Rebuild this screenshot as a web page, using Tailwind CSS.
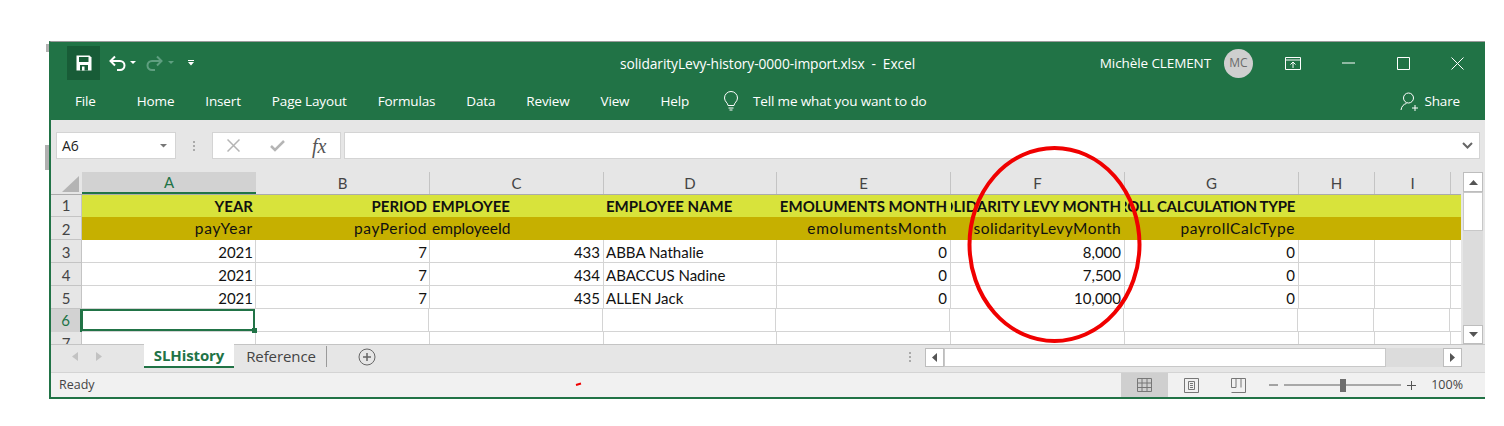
<!DOCTYPE html>
<html lang="en">
<head>
  <meta charset="UTF-8">
  <title>solidarityLevy-history-0000-import.xlsx - Excel</title>
  <script src="https://cdn.jsdelivr.net/npm/@tailwindcss/browser@4"></script>
</head>
<body class="bg-white w-[1504px] h-[426px] overflow-hidden relative font-['Open_Sans',sans-serif]">
  <div class="ml-[49px] mt-[41px] w-[1436px] h-[358px] border-t border-t-[#9a9a9a] border-l-2 border-b-2 border-l-[#217346] border-b-[#217346] flex flex-col bg-[#e6e6e6]">

    <!-- title bar -->
    <div class="h-[39px] bg-[#217346] flex items-center text-white text-[13.5px] relative shrink-0 -ml-[2px]">
      <div class="ml-[18px] mt-[3px] w-[33px] h-[34px] bg-[#185c37] flex items-center justify-center">
        <svg width="16" height="16" viewBox="0 0 16 16"><path d="M0.5 0.5h13l2 2v13h-15z" fill="#fff"/><path d="M3 2h9.500v5H3z" fill="#185c37"/><path d="M4 10h8v5.500H4z" fill="#185c37"/><path d="M6 11.500h2.500v4H6z" fill="#fff"/></svg>
      </div>
      <svg class="ml-[9px] mt-[3px]" width="18" height="16" viewBox="0 0 18 16" fill="none" stroke="#fff" stroke-width="2"><path d="M6 1.500 1.500 6 6 10.500"/><path d="M2 6h9a4.500 4.500 0 0 1 0 9H8"/></svg>
      <svg class="ml-[3px] mt-[3px]" width="6" height="4"><path d="M0 0h6L3 3z" fill="#fff"/></svg>
      <svg class="ml-[9px] mt-[3px]" width="18" height="16" viewBox="0 0 18 16" fill="none" stroke="#5f9f80" stroke-width="2"><path d="M12 1.500 16.500 6 12 10.500"/><path d="M16 6H7a4.500 4.500 0 0 0 0 9h3"/></svg>
      <svg class="ml-[5px] mt-[3px]" width="6" height="4"><path d="M0 0h6L3 3z" fill="#5f9f80"/></svg>
      <svg class="ml-[14px] mt-[3px]" width="6" height="6"><path d="M0 0h6v1H0zM0 2h6L3 5.500z" fill="#fff"/></svg>
      <div class="absolute left-[571px] top-[12px] whitespace-pre text-[13.8px] tracking-[-0.1px]">solidarityLevy-history-0000-import.xlsx  -  Excel</div>
      <div class="ml-auto flex items-center mt-[3px]">
        <span class="text-[13.5px] tracking-[-0.1px]">Michèle CLEMENT</span>
        <span class="ml-[13px] w-[29px] h-[29px] rounded-full bg-[#cfcfcf] text-[#6b6b6b] text-[12px] flex items-center justify-center">MC</span>
        <svg class="ml-[32px]" width="16" height="13" viewBox="0 0 16 13" fill="none" stroke="#fff"><path d="M.5.500h15v12H.5zM.5 3h15"/><path d="M8 11V5M5.500 7.500 8 5l2.500 2.500" /></svg>
        <svg class="ml-[41px]" width="13" height="2"><path d="M0 1h13" stroke="#fff"/></svg>
        <svg class="ml-[42px]" width="13" height="13" fill="none" stroke="#fff"><path d="M.5.500h12v12H.5z"/></svg>
        <svg class="ml-[41px] mr-[21px]" width="13" height="13" fill="none" stroke="#fff"><path d="M.5.500l12 12M12.500.500l-12 12"/></svg>
      </div>
    </div>

    <!-- ribbon tabs -->
    <div class="h-[39px] pt-[1px] bg-[#217346] flex items-center text-white text-[13.5px] tracking-[-0.15px] shrink-0 -ml-[2px]">
      <span class="ml-[26px] mr-[41px]">File</span>
      <div class="flex items-center gap-[31px]">
        <span>Home</span><span>Insert</span><span>Page Layout</span><span>Formulas</span><span>Data</span><span>Review</span><span>View</span><span>Help</span>
      </div>
      <svg class="ml-[34px]" width="16" height="20" viewBox="0 0 16 20" fill="none" stroke="#fff"><path d="M5 14.500c0-2.500-3.500-4-3.500-7.500a6.500 6.500 0 0 1 13 0c0 3.500-3.500 5-3.500 7.500zM5.500 17h5M6.500 19h3"/></svg>
      <span class="ml-[14px]">Tell me what you want to do</span>
      <div class="ml-auto flex items-center mr-[25px]">
        <svg width="19" height="19" viewBox="0 0 19 19" fill="none" stroke="#fff"><circle cx="8.500" cy="6" r="5"/><path d="M1 18c.5-4 3-6 5.500-6.500M12 16h6M15 13v6"/></svg>
        <span class="ml-[5px]">Share</span>
      </div>
    </div>

    <!-- formula bar -->
    <div class="h-[52px] pb-[1px] flex items-center shrink-0 text-[#222]">
      <div class="ml-[5px] w-[120px] h-[27px] bg-white border border-[#d4d4d4] flex items-center justify-between px-[5px] text-[14px]">
        <span>A6</span>
        <svg class="mr-[3px]" width="7" height="4"><path d="M0 0h7L3.500 3.500z" fill="#777"/></svg>
      </div>
      <div class="w-[36px] flex flex-col items-center gap-[2px]">
        <span class="w-[2px] h-[2px] bg-[#aaa]"></span><span class="w-[2px] h-[2px] bg-[#aaa]"></span><span class="w-[2px] h-[2px] bg-[#aaa]"></span>
      </div>
      <div class="w-[129px] h-[27px] bg-white border border-[#d4d4d4] flex items-center">
        <svg class="ml-[14px]" width="13" height="13" fill="none" stroke="#b5b5b5" stroke-width="1.500"><path d="M.5.500l12 12M12.500.500l-12 12"/></svg>
        <svg class="ml-[30px]" width="15" height="12" fill="none" stroke="#b5b5b5" stroke-width="2.500"><path d="M1 6l4 4 9-9"/></svg>
        <span class="ml-[27px] font-['Liberation_Serif',serif] italic text-[20px] text-[#555]">fx</span>
      </div>
      <div class="ml-[3px] w-[1136px] h-[27px] bg-white border border-[#d4d4d4] flex items-center justify-end pr-[6px]">
        <svg width="11" height="7" fill="none" stroke="#666" stroke-width="2"><path d="M1 1l4.500 4.500L10 1"/></svg>
      </div>
    </div>

    <!-- sheet grid + vertical scrollbar -->
    <div class="flex h-[172px] shrink-0 overflow-hidden font-['Lato',sans-serif] text-[15px] text-[#111]">
      <div class="w-[1410px] flex flex-col">
        <!-- column headers -->
        <div class="flex h-[23px] shrink-0 text-[#444] border-b border-[#ababab]">
          <div class="w-[31px] relative"><svg class="absolute right-[3px] bottom-[2px]" width="17" height="16"><path d="M17 0v16H0z" fill="#b4b4b4"/></svg></div>
          <div class="w-[174px] bg-[#d2d2d2] border-b-2 border-[#217346] text-[#217346] flex items-center justify-center">A</div>
          <div class="w-[174px] border-r border-[#c4c4c4] flex items-center justify-center">B</div>
          <div class="w-[174px] border-r border-[#c4c4c4] flex items-center justify-center">C</div>
          <div class="w-[173px] border-r border-[#c4c4c4] flex items-center justify-center">D</div>
          <div class="w-[174px] border-r border-[#c4c4c4] flex items-center justify-center">E</div>
          <div class="w-[174px] border-r border-[#c4c4c4] flex items-center justify-center">F</div>
          <div class="w-[174px] border-r border-[#c4c4c4] flex items-center justify-center">G</div>
          <div class="w-[76px] border-r border-[#c4c4c4] flex items-center justify-center">H</div>
          <div class="w-[76px] border-r border-[#c4c4c4] flex items-center justify-center">I</div>
        </div>

        <!-- row 1 -->
        <div class="flex h-[22px] shrink-0 font-bold">
          <div class="w-[31px] shrink-0 flex items-center justify-center font-normal text-[#444] border-r border-b border-[#c4c4c4]">1</div>
          <div class="flex flex-1 bg-[#d8e33b]">
            <div class="w-[174px] pr-[3px] flex items-center justify-end overflow-hidden"><span class="shrink-0">YEAR</span></div>
            <div class="w-[174px] pr-[3px] flex items-center justify-end overflow-hidden"><span class="shrink-0">PERIOD</span></div>
            <div class="w-[174px] pl-[2px] flex items-center overflow-hidden"><span class="shrink-0">EMPLOYEE</span></div>
            <div class="w-[173px] pl-[2px] flex items-center overflow-hidden"><span class="shrink-0">EMPLOYEE NAME</span></div>
            <div class="w-[174px] pr-[4px] flex items-center justify-end overflow-hidden"><span class="shrink-0">EMOLUMENTS MONTH</span></div>
            <div class="w-[174px] pr-[4px] flex items-center justify-end overflow-hidden"><span class="shrink-0">SOLIDARITY LEVY MONTH</span></div>
            <div class="w-[174px] pr-[4px] flex items-center justify-end overflow-hidden"><span class="shrink-0 tracking-[-0.3px]">PAYROLL CALCULATION TYPE</span></div>
          </div>
        </div>
        <!-- row 2 -->
        <div class="flex h-[23px] shrink-0">
          <div class="w-[31px] shrink-0 pt-[2px] flex items-center justify-center text-[#444] border-r border-b border-[#c4c4c4]">2</div>
          <div class="flex flex-1 bg-[#c6b000] text-[15.5px] [&>div]:pt-[1px]">
            <div class="w-[174px] pr-[3px] flex items-center justify-end"><span class="tracking-[0.75px]">payYear</span></div>
            <div class="w-[174px] pr-[3px] flex items-center justify-end"><span class="tracking-[0.55px]">payPeriod</span></div>
            <div class="w-[174px] pl-[2px] flex items-center"><span>employeeId</span></div>
            <div class="w-[173px] flex items-center"></div>
            <div class="w-[174px] pr-[4px] flex items-center justify-end"><span class="tracking-[0.7px]">emolumentsMonth</span></div>
            <div class="w-[174px] pr-[4px] flex items-center justify-end"><span class="tracking-[0.45px]">solidarityLevyMonth</span></div>
            <div class="w-[174px] pr-[4px] flex items-center justify-end"><span class="tracking-[0.6px]">payrollCalcType</span></div>
          </div>
        </div>
        <!-- data rows -->
        <div class="flex h-[23px] shrink-0">
          <div class="w-[31px] shrink-0 pt-[2px] flex items-center justify-center text-[#444] border-r border-b border-[#c4c4c4]">3</div>
          <div class="flex flex-1 bg-white border-b border-[#d4d4d4] [&>div]:pt-[2px]">
            <div class="w-[174px] px-[2px] border-r border-[#d4d4d4] flex items-center justify-end">2021</div>
            <div class="w-[174px] px-[2px] border-r border-[#d4d4d4] flex items-center justify-end">7</div>
            <div class="w-[174px] px-[3px] border-r border-[#d4d4d4] flex items-center justify-end">433</div>
            <div class="w-[173px] px-[2px] border-r border-[#d4d4d4] flex items-center">ABBA Nathalie</div>
            <div class="w-[174px] px-[3px] border-r border-[#d4d4d4] flex items-center justify-end">0</div>
            <div class="w-[174px] px-[3px] border-r border-[#d4d4d4] flex items-center justify-end">8,000</div>
            <div class="w-[174px] px-[3px] border-r border-[#d4d4d4] flex items-center justify-end">0</div>
            <div class="w-[76px] border-r border-[#d4d4d4]"></div>
            <div class="w-[76px] border-r border-[#d4d4d4]"></div>
          </div>
        </div>
        <div class="flex h-[23px] shrink-0">
          <div class="w-[31px] shrink-0 pt-[2px] flex items-center justify-center text-[#444] border-r border-b border-[#c4c4c4]">4</div>
          <div class="flex flex-1 bg-white border-b border-[#d4d4d4] [&>div]:pt-[2px]">
            <div class="w-[174px] px-[2px] border-r border-[#d4d4d4] flex items-center justify-end">2021</div>
            <div class="w-[174px] px-[2px] border-r border-[#d4d4d4] flex items-center justify-end">7</div>
            <div class="w-[174px] px-[3px] border-r border-[#d4d4d4] flex items-center justify-end">434</div>
            <div class="w-[173px] px-[2px] border-r border-[#d4d4d4] flex items-center">ABACCUS Nadine</div>
            <div class="w-[174px] px-[3px] border-r border-[#d4d4d4] flex items-center justify-end">0</div>
            <div class="w-[174px] px-[3px] border-r border-[#d4d4d4] flex items-center justify-end">7,500</div>
            <div class="w-[174px] px-[3px] border-r border-[#d4d4d4] flex items-center justify-end">0</div>
            <div class="w-[76px] border-r border-[#d4d4d4]"></div>
            <div class="w-[76px] border-r border-[#d4d4d4]"></div>
          </div>
        </div>
        <div class="flex h-[23px] shrink-0">
          <div class="w-[31px] shrink-0 pt-[2px] flex items-center justify-center text-[#444] border-r border-b border-[#c4c4c4]">5</div>
          <div class="flex flex-1 bg-white border-b border-[#d4d4d4] [&>div]:pt-[2px]">
            <div class="w-[174px] px-[2px] border-r border-[#d4d4d4] flex items-center justify-end">2021</div>
            <div class="w-[174px] px-[2px] border-r border-[#d4d4d4] flex items-center justify-end">7</div>
            <div class="w-[174px] px-[3px] border-r border-[#d4d4d4] flex items-center justify-end">435</div>
            <div class="w-[173px] px-[2px] border-r border-[#d4d4d4] flex items-center">ALLEN Jack</div>
            <div class="w-[174px] px-[3px] border-r border-[#d4d4d4] flex items-center justify-end">0</div>
            <div class="w-[174px] px-[3px] border-r border-[#d4d4d4] flex items-center justify-end">10,000</div>
            <div class="w-[174px] px-[3px] border-r border-[#d4d4d4] flex items-center justify-end">0</div>
            <div class="w-[76px] border-r border-[#d4d4d4]"></div>
            <div class="w-[76px] border-r border-[#d4d4d4]"></div>
          </div>
        </div>
        <div class="flex h-[23px] shrink-0">
          <div class="w-[31px] shrink-0 flex items-center justify-center bg-[#d2d2d2] text-[#217346] border-r-2 border-[#217346]">6</div>
          <div class="flex flex-1 bg-white border-b border-[#d4d4d4]">
            <div class="w-[174px] -ml-[1px] border-2 border-[#217346] relative"><span class="absolute -right-[4px] -bottom-[4px] w-[5px] h-[5px] bg-[#217346]"></span></div>
            <div class="w-[174px] border-r border-[#d4d4d4]"></div>
            <div class="w-[174px] border-r border-[#d4d4d4]"></div>
            <div class="w-[173px] border-r border-[#d4d4d4]"></div>
            <div class="w-[174px] border-r border-[#d4d4d4]"></div>
            <div class="w-[174px] border-r border-[#d4d4d4]"></div>
            <div class="w-[174px] border-r border-[#d4d4d4]"></div>
            <div class="w-[76px] border-r border-[#d4d4d4]"></div>
            <div class="w-[76px] border-r border-[#d4d4d4]"></div>
          </div>
        </div>
        <div class="flex h-[14px] shrink-0 overflow-hidden">
          <div class="w-[31px] shrink-0 flex justify-center text-[#444] border-r border-[#c4c4c4] leading-[22px]">7</div>
          <div class="flex flex-1 bg-white">
            <div class="w-[174px] border-r border-[#d4d4d4]"></div>
            <div class="w-[174px] border-r border-[#d4d4d4]"></div>
            <div class="w-[174px] border-r border-[#d4d4d4]"></div>
            <div class="w-[173px] border-r border-[#d4d4d4]"></div>
            <div class="w-[174px] border-r border-[#d4d4d4]"></div>
            <div class="w-[174px] border-r border-[#d4d4d4]"></div>
            <div class="w-[174px] border-r border-[#d4d4d4]"></div>
            <div class="w-[76px] border-r border-[#d4d4d4]"></div>
            <div class="w-[76px] border-r border-[#d4d4d4]"></div>
          </div>
        </div>
      </div>
      <!-- vertical scrollbar -->
      <div class="ml-[2px] w-[20px] bg-[#dcdcdc] flex flex-col">
        <div class="h-[20px] bg-white border border-[#bdbdbd] flex items-center justify-center"><svg width="9" height="5"><path d="M0 5h9L4.500 0z" fill="#555"/></svg></div>
        <div class="h-[39px] bg-white border border-[#c8c8c8]"></div>
        <div class="flex-1"></div>
        <div class="h-[19px] bg-white border border-[#bdbdbd] flex items-center justify-center"><svg width="9" height="5"><path d="M0 0h9L4.500 5z" fill="#555"/></svg></div>
      </div>
    </div>

    <!-- sheet tabs + horizontal scrollbar -->
    <div class="h-[28px] shrink-0 flex border-t border-[#c4c4c4] text-[15px] text-[#444]">
      <div class="w-[93px] flex items-center pl-[21px] pb-[4px] gap-[18px]">
        <svg width="6" height="9"><path d="M6 0v9L0 4.500z" fill="#c2c2c2"/></svg>
        <svg width="6" height="9"><path d="M0 0v9l6-4.500z" fill="#c2c2c2"/></svg>
      </div>
      <div class="h-[24px] w-[90px] -mt-[1px] bg-white border-b-2 border-[#217346] flex items-center justify-center font-bold text-[#217346] tracking-[-0.1px]">SLHistory</div>
      <div class="h-[21px] w-[93px] mt-[1px] pl-[2px] border-r border-[#9a9a9a] flex items-center justify-center tracking-[-0.1px]">Reference</div>
      <svg class="ml-[31px] mt-[3px]" width="18" height="18" fill="none" stroke="#666"><circle cx="9" cy="9" r="8"/><path d="M5 9h8M9 5v8" stroke-width="1.500"/></svg>
      <div class="ml-[533px] mt-[7px] flex flex-col items-center gap-[2px]">
        <span class="w-[2px] h-[2px] bg-[#aaa]"></span><span class="w-[2px] h-[2px] bg-[#aaa]"></span><span class="w-[2px] h-[2px] bg-[#aaa]"></span>
      </div>
      <div class="ml-[14px] mt-[3px] w-[537px] h-[19px] flex bg-[#dcdcdc]">
        <div class="w-[19px] bg-white border border-[#bdbdbd] flex items-center justify-center"><svg width="5" height="9"><path d="M5 0v9L0 4.500z" fill="#555"/></svg></div>
        <div class="w-[442px] bg-white border border-[#c8c8c8]"></div>
        <div class="flex-1"></div>
        <div class="w-[19px] bg-white border border-[#bdbdbd] flex items-center justify-center"><svg width="5" height="9"><path d="M0 0v9l5-4.500z" fill="#555"/></svg></div>
      </div>
    </div>

    <!-- status bar -->
    <div class="flex-1 bg-[#f1f1f1] border-t border-[#d4d4d4] flex items-center text-[12.5px] text-[#444]">
      <span class="ml-[8px]">Ready</span>
      <div class="ml-auto flex items-center h-full">
        <div class="w-[47px] h-full bg-[#cfcfcf] flex items-center justify-center">
          <svg width="15" height="14" fill="none" stroke="#777"><path d="M.5.500h14v13H.5zM.5 5h14M.5 9.500h14M5 .5v13M10 .5v13"/></svg>
        </div>
        <svg class="ml-[16px]" width="15" height="15" fill="none" stroke="#777"><path d="M.5.500h14v14H.5zM4.500 3.500h6v8h-6zM6 5.500h3M6 7.500h3M6 9.500h3"/></svg>
        <svg class="ml-[32px]" width="15" height="15" fill="none" stroke="#777"><path d="M.5 9.500V.5h14v14H.5M5 .5v9H.5M10 .5v9"/></svg>
        <svg class="ml-[23px]" width="9" height="2"><path d="M0 1h9" stroke="#555"/></svg>
        <div class="ml-[6px] w-[117px] h-[13px] relative flex items-center">
          <span class="w-full h-[2px] bg-[#a8a8a8]"></span>
          <span class="absolute left-[56px] top-0 w-[6px] h-[13px] bg-[#6e6e6e]"></span>
        </div>
        <svg class="ml-[6px]" width="9" height="9" stroke="#555"><path d="M0 4.500h9M4.500 0v9"/></svg>
        <span class="ml-[15px] mr-[22px]">100%</span>
      </div>
    </div>
  </div>

  <!-- red hand drawn ellipse and stray marks from the original capture -->
  <svg class="absolute left-0 top-0 pointer-events-none" width="1504" height="426" fill="none">
    <ellipse cx="1054.500" cy="244.500" rx="85" ry="96.500" stroke="#f00000" stroke-width="4"/>
    <path d="M576 385l5-1.500" stroke="#f00000" stroke-width="2"/>
    <path d="M46 44h3v8h-3zM45 145h4v25h-4z" fill="#b0b0b0"/>
  </svg>
</body>
</html>
